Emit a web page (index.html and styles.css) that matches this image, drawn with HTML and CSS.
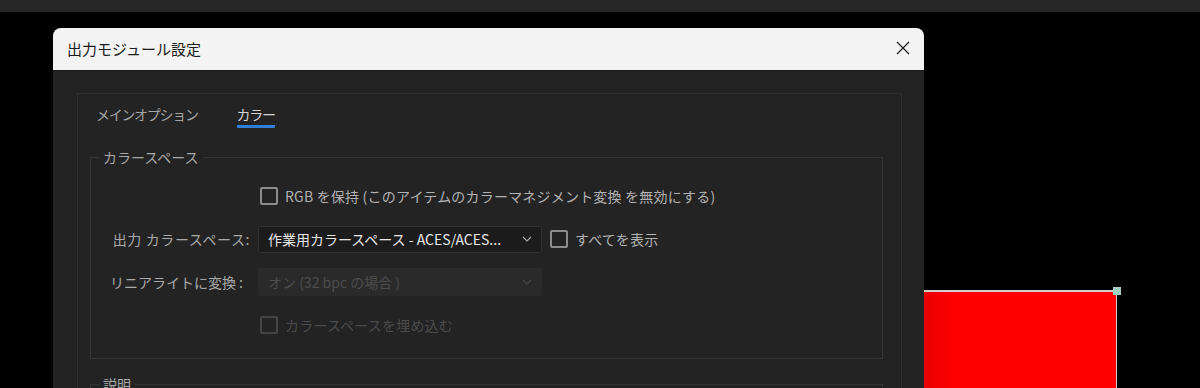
FILE: index.html
```html
<!DOCTYPE html>
<html lang="ja">
<head>
<meta charset="utf-8">
<link rel="stylesheet" href="styles.css">
</head>
<body>
<div class="topbar"></div>
<div class="stage">
  <div class="layer"><span class="handle"></span></div>
  <div class="dialog">
    <div class="titlebar">
      <span class="title">出力モジュール設定</span>
      <svg class="close" width="16" height="16" viewBox="0 0 16 16"><path d="M2 2 L14 14 M14 2 L2 14" stroke="#1e1e1e" stroke-width="1.3" fill="none"/></svg>
    </div>
    <div class="body">
      <div class="panel">
        <div class="tabs">
          <span class="tab">メインオプション</span>
          <span class="tab active">カラー</span>
        </div>
        <fieldset class="group">
          <legend>カラースペース</legend>
          <div class="grid">
            <div></div>
            <label class="check"><span class="box"></span>RGB を保持 (このアイテムのカラーマネジメント変換 を無効にする)</label>

            <div class="lbl">出力 カラースペース:</div>
            <div class="ctrl">
              <div class="select"><span class="val">作業用カラースペース - ACES/ACES...</span><svg class="chev" width="10" height="6" viewBox="0 0 10 6"><path d="M1 1 L5 5 L9 1" stroke="#a8a8a8" stroke-width="1.2" fill="none"/></svg></div>
              <label class="check"><span class="box"></span>すべてを表示</label>
            </div>

            <div class="lbl pad">リニアライトに変換 :</div>
            <div class="ctrl">
              <div class="select disabled"><span class="val">オン (32 bpc の場合 )</span><svg class="chev" width="10" height="6" viewBox="0 0 10 6"><path d="M1 1 L5 5 L9 1" stroke="#444" stroke-width="1.2" fill="none"/></svg></div>
            </div>

            <div></div>
            <label class="check disabled"><span class="box"></span>カラースペースを埋め込む</label>
          </div>
        </fieldset>
        <fieldset class="group second">
          <legend>説明</legend>
        </fieldset>
      </div>
    </div>
  </div>
</div>
</body>
</html>
```
FILE: styles.css
```css
html, body {
  margin: 0;
  padding: 0;
  height: 388px;
  overflow: hidden;
  background: #000;
  font-family: "Noto Sans CJK JP", "Noto Sans", sans-serif;
}
.topbar {
  height: 12px;
  background: #262626;
}
.stage {
  position: relative;
  padding: 16px 0 0 53px;
}
.layer {
  position: absolute;
  left: 924px;
  top: 278px;
  width: 192px;
  height: 200px;
  background: linear-gradient(90deg, #e80000 0px, #ff0000 30px);
  border-top: 2px solid #cfcfcf;
  border-right: 1px solid #cfcfcf;
}
.handle {
  position: absolute;
  right: -5px;
  top: -5px;
  width: 8px;
  height: 8px;
  background: #a4cfc3;
}
.dialog {
  position: relative;
  width: 871px;
  height: 380px;
  background: #232323;
  border-radius: 8px 8px 0 0;
  overflow: hidden;
}
.titlebar {
  height: 43px;
  background: #f3f3f3;
  display: flex;
  align-items: center;
  justify-content: space-between;
  padding: 0 13px 0 14px;
  border-bottom: 1px solid #1a1a1a;
  box-sizing: border-box;
}
.title {
  font-size: 15px;
  color: #1b1b1b;
  line-height: 20px;
  margin-top: -1px;
}
.close {
  display: block;
  margin-top: -3px;
}
.body {
  padding: 22px 22px 0 24px;
}
.panel {
  border: 1px solid #2f2f2f;
  height: 400px;
}
.tabs {
  display: flex;
  gap: 39px;
  padding: 10px 0 0 18px;
}
.tab {
  font-size: 14px;
  line-height: 20px;
  color: #a4a4a4;
  letter-spacing: -1.3px;
  padding-bottom: 1px;
  border-bottom: 3px solid transparent;
}
.tab.active {
  color: #d4d4d4;
  border-bottom-color: #2e7fd9;
  border-radius: 1px;
}
.group {
  margin: 19px 18px 0 12px;
  padding: 0;
  border: 1px solid #343434;
  min-width: 0;
}
.group legend {
  margin-left: 8px;
  padding: 0 4px;
  font-size: 14px;
  line-height: 20px;
  color: #a9a9a9;
}
.grid {
  display: grid;
  grid-template-columns: 159px 1fr;
  grid-auto-rows: 28px;
  column-gap: 8px;
  row-gap: 15px;
  padding: 15px 0 19px 0;
  align-items: center;
}
.lbl {
  text-align: right;
  font-size: 14px;
  color: #a9a9a9;
  line-height: 20px;
  letter-spacing: 0.6px;
}
.lbl.pad {
  padding-right: 7px;
  letter-spacing: 0;
}
.ctrl {
  display: flex;
  align-items: center;
  gap: 8px;
}
.check {
  display: flex;
  align-items: center;
  gap: 7px;
  margin-left: 2px;
  font-size: 14px;
  line-height: 20px;
  color: #b2b2b2;
  letter-spacing: 0.2px;
}
.ctrl .check {
  margin-left: 0;
}
.box {
  width: 14px;
  height: 14px;
  border: 2px solid #8c8c8c;
  border-radius: 2px;
  flex: none;
}
.check.disabled {
  color: #4b4b4b;
}
.check.disabled .box {
  border-color: #454545;
}
.select {
  width: 284px;
  height: 27px;
  box-sizing: border-box;
  background: #1c1c1c;
  border: 1px solid #303030;
  border-radius: 2px;
  display: flex;
  align-items: center;
  justify-content: space-between;
  padding: 0 9px 0 9px;
}
.val {
  font-size: 14px;
  color: #e6e6e6;
  line-height: 20px;
  white-space: nowrap;
}
.select.disabled {
  height: 28px;
  background: #2a2a2a;
  border-color: #2a2a2a;
}
.select.disabled .val {
  color: #4d4d4d;
}
.chev {
  display: block;
}
.second {
  margin-top: 15px;
  height: 60px;
}
```
